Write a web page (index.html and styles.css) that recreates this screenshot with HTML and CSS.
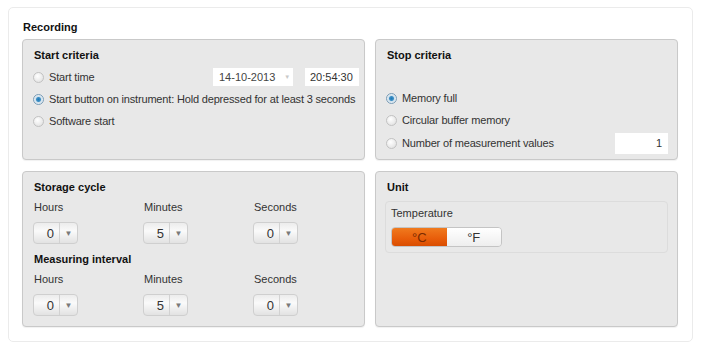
FILE: index.html
```html
<!DOCTYPE html>
<html lang="en">
<head>
    <meta charset="UTF-8">
    <title>Recording</title>
    <link rel="stylesheet" href="styles.css">
</head>
<body>
    <div class="card">
        <h1 class="card-title">Recording</h1>
        <div class="grid">
            <div class="panel">
                <h2>Start criteria</h2>
                <div class="row">
                    <label class="radio"><span class="dot"></span>Start time</label>
                    <div class="date-box">14-10-2013<span class="caret">&#9660;</span></div>
                    <div class="time-box">20:54:30</div>
                </div>
                <div class="row">
                    <label class="radio"><span class="dot on"></span>Start button on instrument: Hold depressed for at least 3 seconds</label>
                </div>
                <div class="row">
                    <label class="radio"><span class="dot"></span>Software start</label>
                </div>
            </div>

            <div class="panel">
                <h2>Stop criteria</h2>
                <div class="stop-list">
                    <div class="row">
                        <label class="radio"><span class="dot on"></span>Memory full</label>
                    </div>
                    <div class="row">
                        <label class="radio"><span class="dot"></span>Circular buffer memory</label>
                    </div>
                    <div class="row">
                        <label class="radio"><span class="dot"></span>Number of measurement values</label>
                        <div class="num-box">1</div>
                    </div>
                </div>
            </div>

            <div class="panel">
                <h2>Storage cycle</h2>
                <div class="fields">
                    <div class="field"><span>Hours</span><div class="spin"><b>0</b><i>&#9660;</i></div></div>
                    <div class="field"><span>Minutes</span><div class="spin"><b>5</b><i>&#9660;</i></div></div>
                    <div class="field"><span>Seconds</span><div class="spin"><b>0</b><i>&#9660;</i></div></div>
                </div>
                <h2>Measuring interval</h2>
                <div class="fields">
                    <div class="field"><span>Hours</span><div class="spin"><b>0</b><i>&#9660;</i></div></div>
                    <div class="field"><span>Minutes</span><div class="spin"><b>5</b><i>&#9660;</i></div></div>
                    <div class="field"><span>Seconds</span><div class="spin"><b>0</b><i>&#9660;</i></div></div>
                </div>
            </div>

            <div class="panel">
                <h2>Unit</h2>
                <div class="group">
                    <div class="group-label">Temperature</div>
                    <div class="toggle">
                        <span class="opt active">&deg;C</span>
                        <span class="opt">&deg;F</span>
                    </div>
                </div>
            </div>
        </div>
    </div>
</body>
</html>
```

FILE: styles.css
```css
body {
    margin: 0;
    background: #ffffff;
    font-family: "Liberation Sans", Arial, sans-serif;
    font-size: 11px;
    color: #222;
}
.card {
    margin: 7px 0 0 8px;
    width: 685px;
    height: 335px;
    box-sizing: border-box;
    border: 1px solid #ebebeb;
    border-radius: 5px;
    padding: 13px 14px 14px 13px;
}
.card-title {
    margin: 0 0 5px 1px;
    font-size: 11px;
    font-weight: bold;
    line-height: 13px;
    color: #111;
}
.grid {
    display: grid;
    grid-template-columns: 343px 303px;
    grid-template-rows: 121px 156px;
    column-gap: 10px;
    row-gap: 11px;
}
.panel {
    background: #e8e8e8;
    border: 1px solid #c9c9c9;
    border-radius: 4px;
    box-shadow: 0 1px 1px rgba(0, 0, 0, 0.06);
    padding: 9px 10px 0 11px;
    box-sizing: border-box;
    white-space: nowrap;
}
.panel h2 {
    margin: 0;
    font-size: 11px;
    font-weight: bold;
    line-height: 13px;
    color: #111;
}
.row {
    display: flex;
    align-items: center;
    height: 22px;
}
.panel h2 + .row {
    margin-top: 4px;
}
.radio {
    display: flex;
    align-items: center;
    flex: 1;
    color: #333;
    letter-spacing: -0.17px;
}
.dot {
    width: 9px;
    height: 9px;
    flex-shrink: 0;
    border-radius: 50%;
    border: 1px solid #c2c2c2;
    background: radial-gradient(circle at 40% 35%, #ffffff, #dcdcdc);
    margin: 0 5px 0 -1px;
}
.dot.on {
    border-color: #7a9cb6;
    background: radial-gradient(circle at 50% 50%, #1d79b8 0, #3e8fc4 2px, #cfe0ec 3px, #eef3f7 5px);
}
.date-box {
    width: 80px;
    height: 18px;
    flex-shrink: 0;
    background: #fff;
    box-sizing: border-box;
    padding-left: 6px;
    display: flex;
    align-items: center;
    color: #444;
    margin-right: 12px;
}
.caret {
    font-size: 6px;
    color: #c8c8c8;
    margin-left: 9px;
}
.time-box {
    width: 54px;
    height: 18px;
    flex-shrink: 0;
    background: #fff;
    box-sizing: border-box;
    padding-left: 5px;
    display: flex;
    align-items: center;
    color: #333;
    margin-right: -5px;
}
.stop-list {
    margin-top: 25px;
}
.stop-list .row:last-child {
    margin-top: 1px;
}
.num-box {
    width: 53px;
    height: 21px;
    flex-shrink: 0;
    background: #fff;
    box-sizing: border-box;
    padding-right: 6px;
    display: flex;
    align-items: center;
    justify-content: flex-end;
    color: #333;
    margin-right: -1px;
}
.fields {
    display: flex;
    margin: 7px 0 9px;
}
.field {
    width: 110px;
    flex-shrink: 0;
    display: flex;
    flex-direction: column;
    color: #333;
}
.field span {
    line-height: 13px;
    margin-bottom: 8px;
}
.spin {
    display: flex;
    width: 45px;
    height: 22px;
    margin-left: -1px;
    box-sizing: border-box;
    border: 1px solid #cfcfcf;
    border-radius: 4px;
    background: linear-gradient(#ececec, #fafafa 40%, #e2e2e2);
    overflow: hidden;
}
.spin b {
    flex: 1;
    font-weight: normal;
    font-size: 13px;
    display: flex;
    align-items: center;
    justify-content: flex-end;
    padding-right: 5px;
    color: #333;
    border-right: 1px solid #d2d2d2;
}
.spin i {
    width: 17px;
    font-style: normal;
    font-size: 8px;
    color: #7a7a7a;
    display: flex;
    align-items: center;
    justify-content: center;
}
.group {
    margin: 7px -1px 0 -2px;
    height: 52px;
    box-sizing: border-box;
    border: 1px solid #dcdcdc;
    border-radius: 4px;
    padding: 5px 5px 0;
}
.group-label {
    color: #333;
    font-size: 11px;
    line-height: 13px;
}
.toggle {
    display: flex;
    width: 111px;
    height: 20px;
    margin-top: 7px;
    box-sizing: border-box;
    border: 1px solid #c4c4c4;
    border-radius: 4px;
    overflow: hidden;
}
.opt {
    width: 56px;
    display: flex;
    align-items: center;
    justify-content: center;
    font-size: 13px;
    color: #333;
    background: linear-gradient(#ffffff, #eeeeee);
}
.opt.active {
    color: #7a2a00;
    background: linear-gradient(#f07a1e, #e85d0a 60%, #d94d00);
}
```
